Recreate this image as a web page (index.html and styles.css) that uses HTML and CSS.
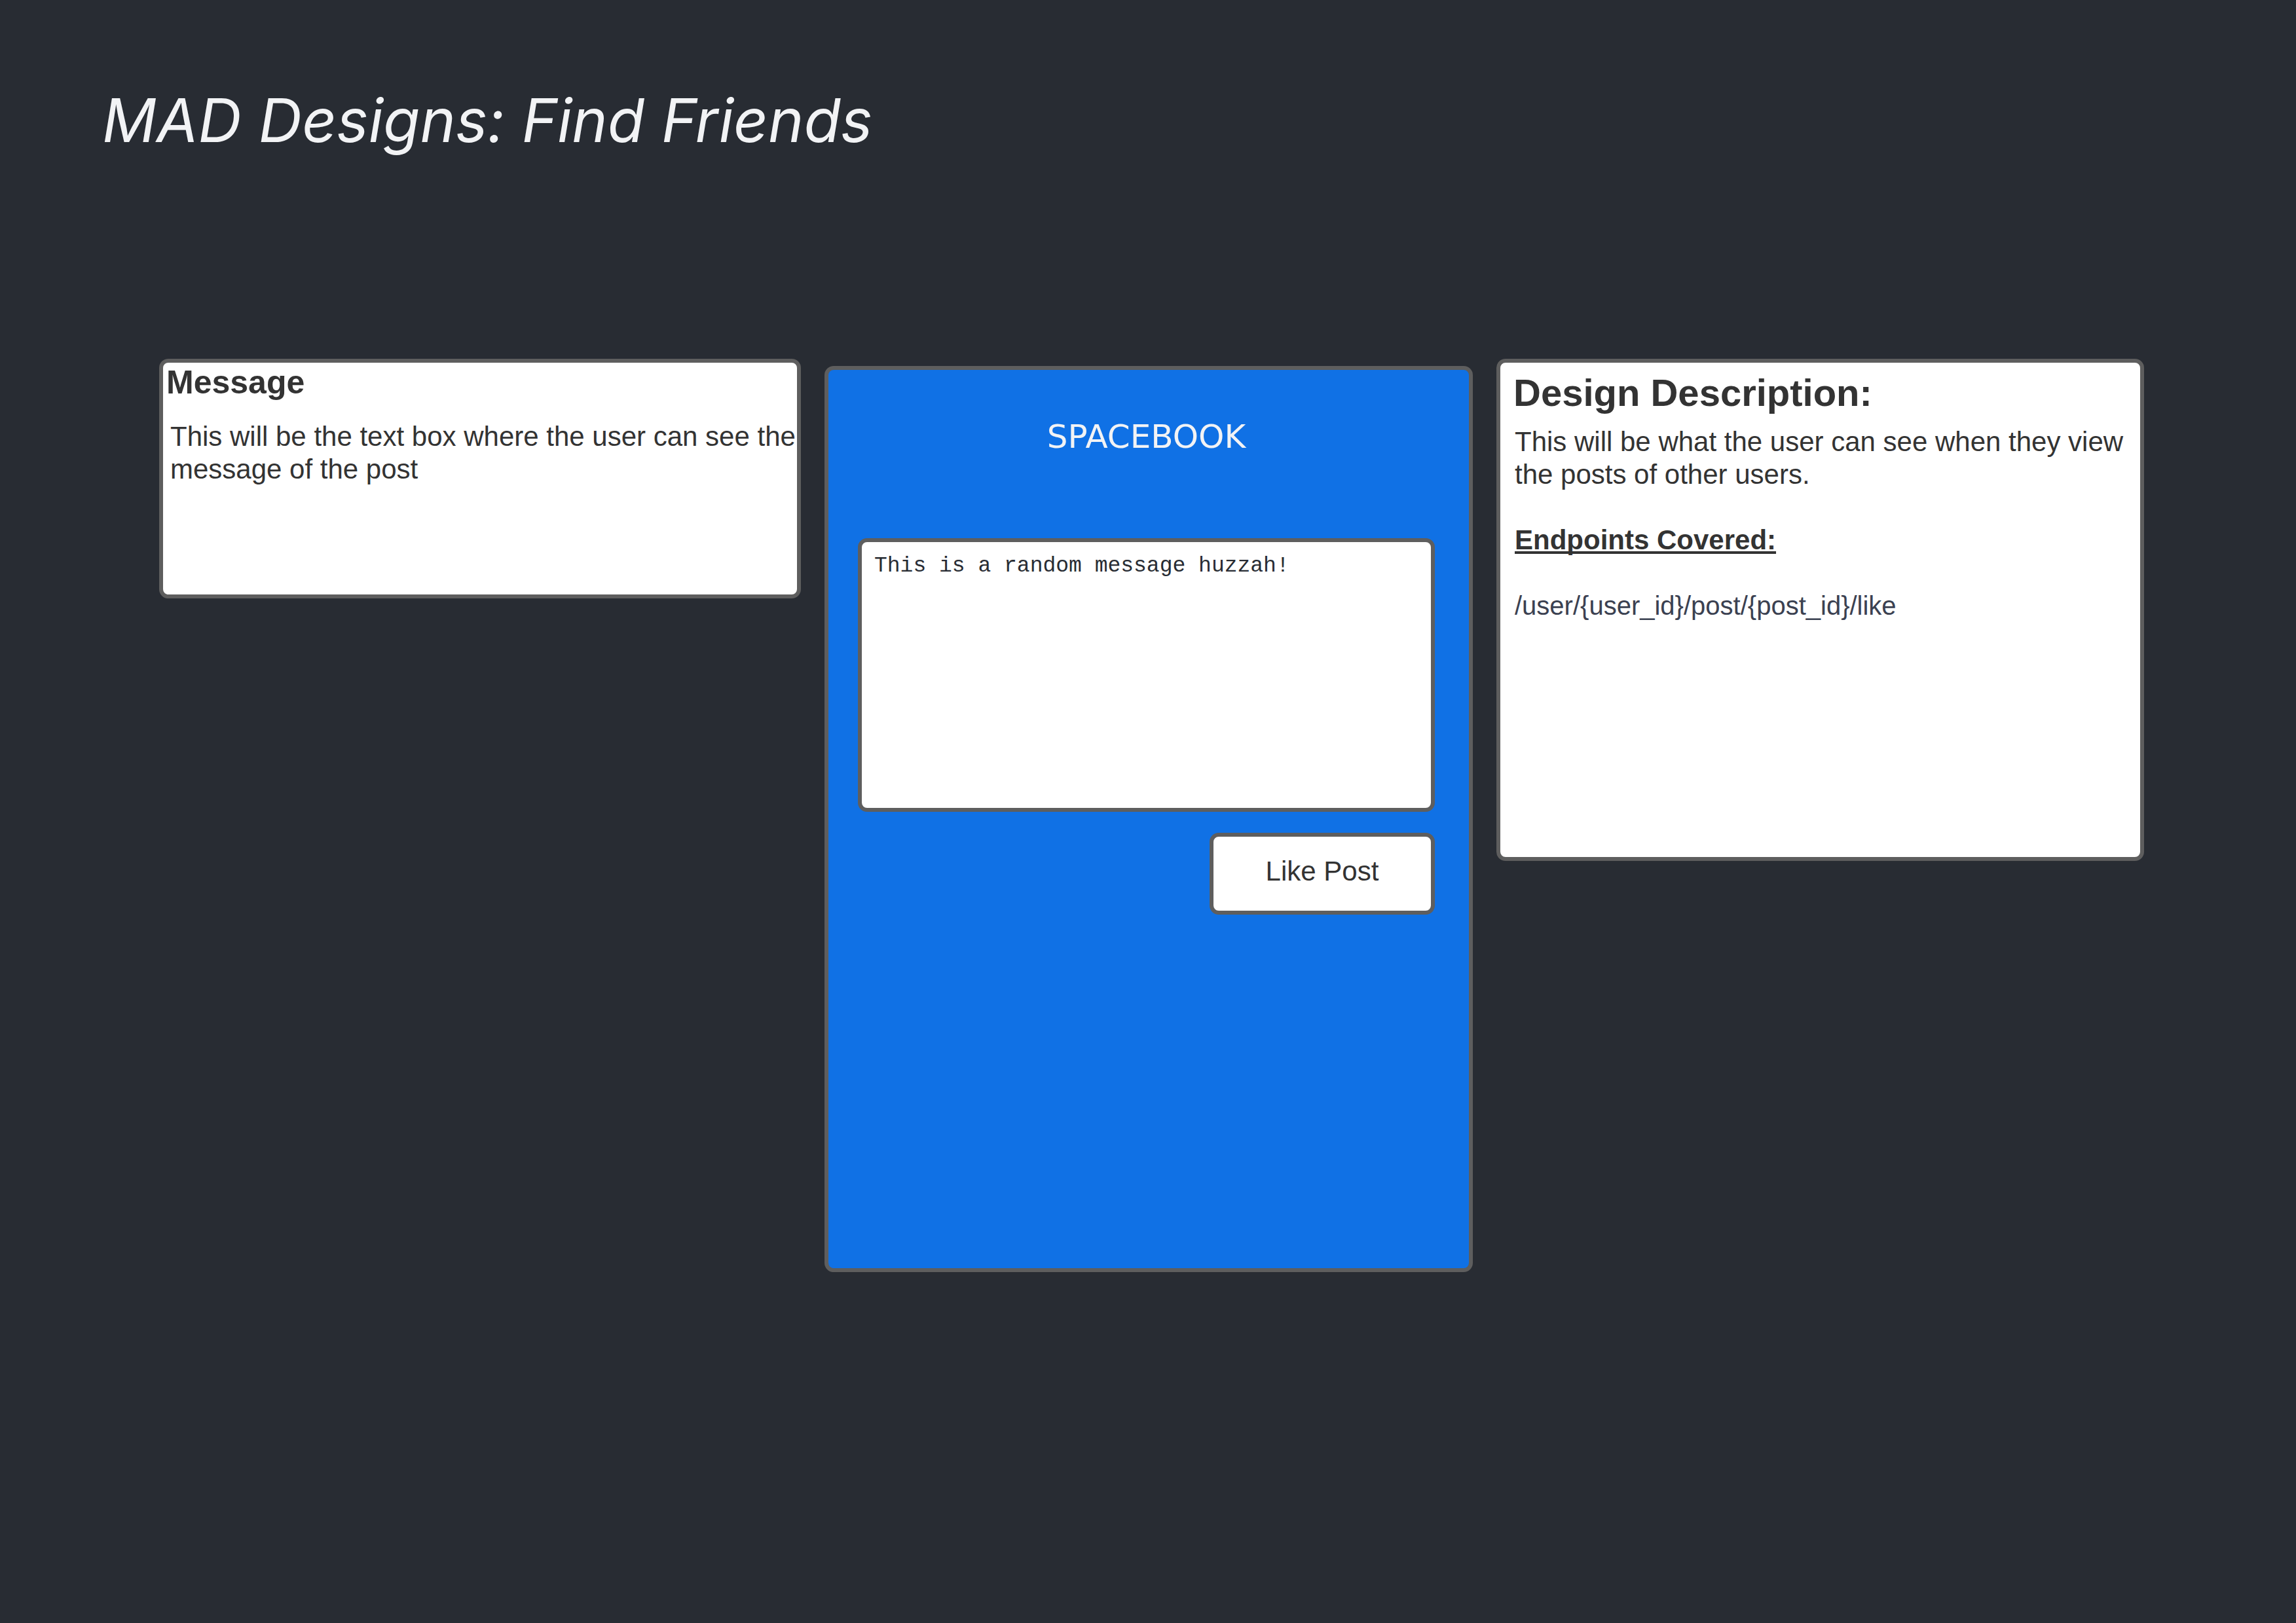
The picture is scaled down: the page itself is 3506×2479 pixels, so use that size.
FILE: index.html
```html
<!DOCTYPE html>
<html lang="en">
<head>
  <meta charset="utf-8">
  <meta name="viewport" content="width=device-width, initial-scale=1">
  <title>MAD Designs: Find Friends</title>
  <link rel="stylesheet" href="styles.css">
</head>
<body>
  <header class="page-header">
    <h1 class="page-title">MAD Designs: Find Friends</h1>
  </header>
  <main class="board">
    <section class="panel note">
      <h2 class="note-title"><label for="message">Message</label></h2>
      <p class="note-text">This will be the text box where the user can see the message of the post</p>
    </section>

    <section class="panel phone">
      <h2 class="brand">SPACEBOOK</h2>
      <textarea class="panel message" id="message" readonly>This is a random message huzzah!</textarea>
      <button class="panel like" type="button">Like Post</button>
    </section>

    <section class="panel description">
      <h2 class="description-title">Design Description:</h2>
      <div class="description-body">
        <p>This will be what the user can see when they view the posts of other users.</p>
        <h3 class="endpoints-title">Endpoints Covered:</h3>
        <p class="endpoint">/user/{user_id}/post/{post_id}/like</p>
      </div>
    </section>
  </main>
</body>
</html>
```
FILE: styles.css
```css
* {
  box-sizing: border-box;
  margin: 0;
}

body {
  min-height: 100vh;
  background: #282c33;
  color: #333333;
  font-family: "Liberation Sans", Arial, sans-serif;
  font-size: 42px;
  line-height: 50px;
}

.page-header {
  padding: 124px 156px 0;
}

.page-title {
  color: #f2f3f5;
  font-family: Inter, sans-serif;
  font-size: 92px;
  font-style: italic;
  font-weight: 400;
  line-height: 120px;
}

.board {
  display: grid;
  grid-template-columns: 980fr 990fr 989fr;
  align-items: start;
  gap: 36px;
  padding: 304px 232px 80px 243px;
}

.panel {
  border: 6px solid #5e5e5e;
  border-radius: 14px;
  background: #ffffff;
}

/* Left note */
.note {
  min-height: 366px;
}

.note-title {
  padding-left: 5px;
  font-size: 50px;
  line-height: 60px;
}

.note-text {
  margin-top: 28px;
  padding-left: 11px;
}

/* Phone mock-up */
.phone {
  display: flex;
  flex-direction: column;
  min-height: 1384px;
  margin-top: 11px;
  padding: 72px 52px 72px 45px;
  background: #1071e5;
}

.brand {
  color: #f2f3f5;
  font-family: "DejaVu Sans", sans-serif;
  font-size: 50px;
  font-weight: 400;
  line-height: 60px;
  text-align: center;
}

.message {
  display: block;
  width: 100%;
  height: 418px;
  margin-top: 125px;
  padding: 18px 19px;
  color: #282c33;
  font-family: "Liberation Mono", "Courier New", monospace;
  font-size: 33px;
  line-height: 38px;
  resize: none;
}

.like {
  align-self: flex-end;
  min-width: 344px;
  min-height: 125px;
  margin-top: 32px;
  padding: 0 24px 8px;
  color: inherit;
  font: inherit;
}

/* Right description */
.description {
  min-height: 767px;
  padding: 16px 20px;
}

.description-title {
  font-size: 58px;
  line-height: 60px;
}

.description-body {
  margin-top: 20px;
  padding-left: 2px;
}

.endpoints-title {
  margin: 50px 0;
  font-size: 42px;
  line-height: 50px;
  text-decoration: underline 4px;
  text-decoration-skip-ink: none;
  text-underline-offset: 3px;
}

.endpoint {
  color: #3b4151;
  font-size: 40px;
}
```
